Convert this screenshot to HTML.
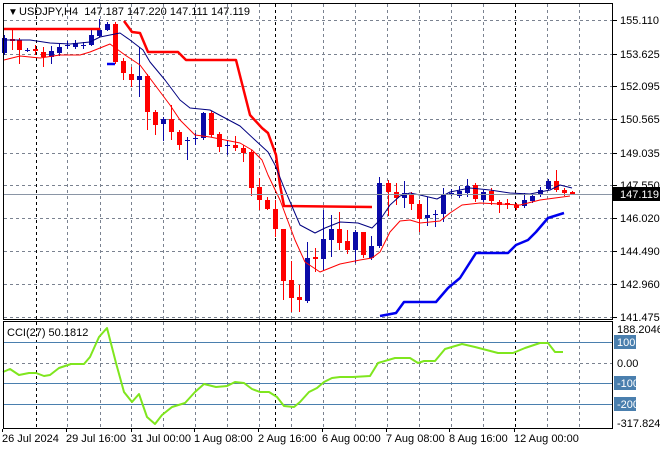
<!DOCTYPE html>
<html><head><meta charset="utf-8"><style>
html,body{margin:0;padding:0;background:#fff;}
svg{display:block;font-family:"Liberation Sans",sans-serif;}
</style></head><body>
<svg id="s" width="660" height="450" xmlns="http://www.w3.org/2000/svg">
<rect width="660" height="450" fill="#fff"/>
<g id="grid" stroke="#7a8290" stroke-width="1" stroke-dasharray="3,3"></g>
<g id="candles"></g>
<g id="lines" fill="none" stroke-linejoin="round"></g>
<line x1="4" y1="194.5" x2="612" y2="194.5" stroke="#8a95a5" stroke-width="1"/>
<rect x="3.5" y="3.5" width="609" height="316" fill="none" stroke="#000"/>
<rect x="3.5" y="321.5" width="609" height="107" fill="none" stroke="#000"/>
<g id="axis" font-size="11" fill="#000"></g>
<text x="8" y="15" font-size="10">▼</text>
<text x="19" y="15" font-size="11" fill="#000" style="white-space:pre">USDJPY,H4  147.187 147.220 147.111 147.119</text>
<text x="7" y="336" font-size="11">CCI(27) 50.1812</text>
</svg>
<script>
var NS="http://www.w3.org/2000/svg";
function el(p,t,a,txt){var e=document.createElementNS(NS,t);for(var k in a)e.setAttribute(k,a[k]);if(txt!==undefined)e.textContent=txt;p.appendChild(e);return e;}
var g=document.getElementById('grid');
[20,54,86,119,153,185,218,251,284,317].forEach(function(y){el(g,'line',{x1:4,x2:612,y1:y+.5,y2:y+.5});});
[363].forEach(function(y){el(g,'line',{x1:4,x2:612,y1:y+.5,y2:y+.5});});
var vl=[67,100,131,163,195,227,259,291,323,355,387,419,451,483,547,579];
vl.forEach(function(x){el(g,'line',{x1:x+.5,x2:x+.5,y1:4,y2:319});el(g,'line',{x1:x+.5,x2:x+.5,y1:322,y2:428});});
[36,275,515].forEach(function(x){el(g,'line',{x1:x+.5,x2:x+.5,y1:4,y2:319,stroke:'#000'});el(g,'line',{x1:x+.5,x2:x+.5,y1:322,y2:428,stroke:'#000'});});
[342,383,404].forEach(function(y){el(g,'line',{x1:4,x2:612,y1:y+.5,y2:y+.5,stroke:'#4a7fae','stroke-dasharray':'none'});});
var C=[
['b',4,38,53,35,55],['r',12,39,41,30,50],['r',19,40,50,38,64],['b',27,50,51,48,52],['r',35,49,51,45,55],['r',43,52,57,47,67],['b',51,51,57,46,64],['b',59,47,53,44,56],['b',67,45,46,41,49],['b',75,43,47,40,49],['b',83,45,46,42,49],['b',91,35,45,30,46],['b',99,30,36,19,37],['b',107,24,30,22,31],['r',115,24,62,22,64],['r',123,61,73,58,80],['r',131,74,80,67,87],['b',139,76,80,47,97],['r',147,76,112,74,130],['r',155,112,125,110,135],['b',163,119,124,117,141],['r',171,119,132,105,140],['r',179,132,145,130,150],['b',187,140,141,137,160],['b',195,138,139,133,145],['b',203,113,138,112,140],['r',211,113,135,111,137],['r',219,134,147,132,152],['b',227,145,146,140,155],['r',235,145,148,136,151],['r',243,148,153,145,162],['r',251,152,188,150,196],['r',259,187,200,178,210],['r',267,200,209,197,210],['r',275,209,229,200,237],['r',283,229,281,229,300],['r',291,280,298,261,312],['r',299,297,300,285,312],['b',307,258,301,242,303],['r',315,257,259,248,272],['b',323,239,259,210,270],['b',331,229,240,215,257],['r',339,229,243,212,250],['r',347,241,250,230,254],['b',355,232,250,230,263],['r',363,232,255,232,258],['b',371,246,258,236,260],['b',379,183,246,177,248],['r',388,183,192,180,216],['r',396,192,198,183,205],['b',404,193,198,181,208],['r',411,194,204,192,210],['r',419,204,219,200,232],['b',427,215,218,197,226],['b',435,214,215,210,227],['b',443,195,214,188,222],['b',451,193,194,189,196],['b',459,191,196,186,198],['b',467,186,193,179,197],['r',475,185,199,183,202],['b',483,192,200,190,202],['r',491,191,201,188,205],['r',499,202,205,200,213],['r',507,203,205,199,209],['r',516,205,208,203,210],['b',524,200,206,193,208],['b',532,196,201,194,203],['b',540,190,195,187,197],['b',548,181,189,179,190],['r',556,181,190,170,192],['r',564,190,193,188,196],['r',572,192,194,191,195]];
var cg=document.getElementById('candles');
C.forEach(function(c){var col=c[0]=='r'?'#ff0000':'#0a0aa8';var x=c[1];
el(cg,'rect',{x:x,y:c[4],width:1,height:c[5]-c[4],fill:col});
var h=Math.max(1,c[3]-c[2]);el(cg,'rect',{x:x-2,y:c[2],width:5,height:h,fill:col});});
var lg=document.getElementById('lines');
function pl(pts,col,w){el(lg,'polyline',{points:pts,stroke:col,'stroke-width':w});}
pl("3,29 100,29","#ff0000",2.5);
pl("124,21 132,32 140,33 148,52 178,52 186,60 236,60 250,115 262,128 268,133 276,155 280,185 284,206 372,207","#ff0000",2.5);
pl("107,64 115,64","#0000ee",2.5);
pl("380,316 396,313 404,302 436,302 448,288 460,278 476,253 508,253 516,245 528,240 536,232 548,218 564,213","#0000ee",2.5);
pl("4,40 30,40 50,43 70,44 90,42 100,37 110,35 120,33 130,40 143,50 150,62 165,80 180,100 190,108 210,110 225,118 240,126 255,140 268,152 275,165 285,190 300,225 315,233 325,228 340,222 358,223 372,228 380,220 390,205 400,196 410,193 420,195 437,199 450,192 470,188 490,190 510,193 530,194 550,190 560,185 572,188","#000080",1);
pl("4,60 20,56 40,58 60,55 80,55 90,52 100,48 110,44 125,55 140,65 155,85 170,105 180,120 195,135 210,137 240,143 252,150 262,160 268,175 280,200 295,240 305,262 320,272 340,264 360,260 372,258 380,252 390,232 400,221 410,220 420,223 440,221 450,213 462,205 480,203 500,204 520,205 540,200 555,198 570,196","#ff0000",1);
pl("3,372 10,369 19,375 29,373 36,373 44,376 50,375 59,368 71,364 84,364 90,357 99,337 107,328 116,363 124,392 132,402 139,394 147,417 155,424 162,415 172,407 185,403 195,392 204,384 216,387 227,386 235,382 244,383 252,389 260,392 269,392 277,397 284,406 294,407 300,402 309,392 317,388 324,382 332,378 340,377 353,377 370,376 378,363 395,358 410,358 418,363 424,361 435,361 445,349 462,344 475,347 498,353 513,353 525,348 540,343 548,343 555,352 563,352","#7fe61e",2);
var ax=document.getElementById('axis');
[["155.110",20],["153.625",54],["152.095",86],["150.565",119],["149.035",153],["147.550",185],["146.020",218],["144.490",251],["142.960",284],["141.475",317]].forEach(function(p){el(ax,'line',{x1:613,x2:617,y1:p[1]+.5,y2:p[1]+.5,stroke:'#000'});el(ax,'text',{x:620,y:p[1]+4},p[0]);});
el(ax,'rect',{x:613,y:187,width:47,height:14,fill:'#000'});
el(ax,'text',{x:620,y:198,fill:'#fff'},"147.119");
el(ax,'text',{x:617,y:333},"188.2046");
[["100",342],["-100",383],["-200",404]].forEach(function(p){el(ax,'rect',{x:614,y:p[1]-7,width:22,height:14,fill:'#4a7fae'});el(ax,'text',{x:617,y:p[1]+4,fill:'#fff'},p[0]);});
el(ax,'text',{x:617,y:367},"0.00");
el(ax,'text',{x:617,y:427},"-317.824");
[["26 Jul 2024",2],["29 Jul 16:00",66],["31 Jul 00:00",131],["1 Aug 08:00",194],["2 Aug 16:00",258],["6 Aug 00:00",322],["7 Aug 08:00",386],["8 Aug 16:00",449],["12 Aug 00:00",514]].forEach(function(p){el(ax,'text',{x:p[1],y:442},p[0]);el(ax,'line',{x1:p[1]+.5,x2:p[1]+.5,y1:429,y2:432,stroke:'#000'});});
</script>
</body></html>
